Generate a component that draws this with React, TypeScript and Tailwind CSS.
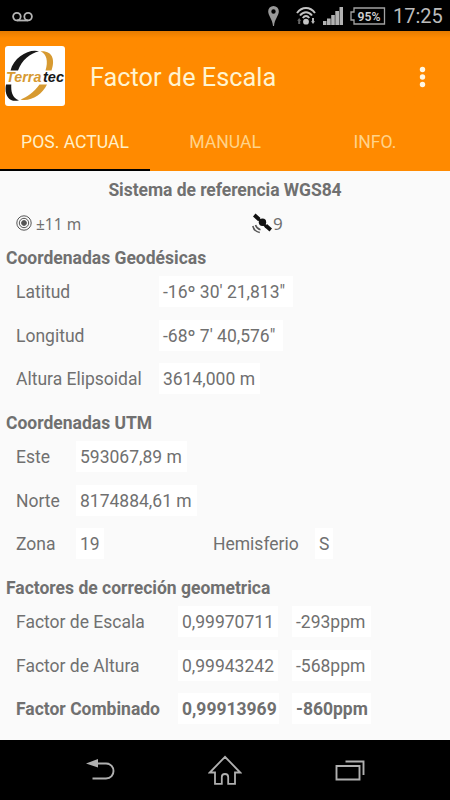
import React from "react";

function Value({ children, className = "" }: { children: React.ReactNode; className?: string }) {
  return <span className={`h-[31px] bg-white px-[4px] ${className}`}>{children}</span>;
}

function Heading({ children }: { children: React.ReactNode }) {
  return <h2 className="h-[33.6px] pt-[11.6px] pl-[6px] font-bold leading-[22px]">{children}</h2>;
}

function Row({
  label,
  labelWidth,
  children,
  bold = false,
}: {
  label: string;
  labelWidth: string;
  children: React.ReactNode;
  bold?: boolean;
}) {
  return (
    <div className={`flex h-[43.8px] items-center pl-[16px] leading-[32.6px] ${bold ? "font-bold" : ""}`}>
      <span className={`h-[31px] shrink-0 ${labelWidth}`}>{label}</span>
      {children}
    </div>
  );
}

function StatusBar() {
  return (
    <div className="flex h-[31px] shrink-0 items-center bg-black text-[#b4b4b4]">
      <svg className="mt-[2px] ml-[12px]" width="21" height="12" viewBox="0 0 21 12" fill="none" stroke="currentColor" strokeWidth="1.8">
        <circle cx="4.9" cy="5.6" r="3.8" />
        <circle cx="16.1" cy="5.6" r="3.8" />
        <path d="M4.9 9.5H16.1" />
      </svg>
      <svg className="ml-[235px]" width="11" height="20" viewBox="0 0 11 20" fill="#999">
        <path fillRule="evenodd" d="M5.5 0A5.3 5.3 0 0 0 .2 5.5C.2 9.5 4.4 13 5 20h1c.6-7 4.8-10.500 4.800-14.500A5.300 5.300 0 0 0 5.500 0Zm0 3.300a2.200 2.200 0 1 1 0 4.400 2.200 2.200 0 0 1 0-4.400Z" />
      </svg>
      <svg className="ml-[17px]" width="20" height="20" viewBox="0 0 20 20" fill="none" stroke="#c4c4c4" strokeWidth="2">
        <path d="M1 7C6 .3 14 .3 19 7" />
        <path d="M4 9.500C7.500 5 12.500 5 16 9.500" />
        <path d="M6.800 12C8.700 9.300 11.300 9.300 13.200 12" />
        <circle cx="10" cy="15.700" r="2.900" fill="#c4c4c4" stroke="none" />
        <path d="M3.200 12 5.200 14.700H4.200V18H2.200V14.700H1.200Z" fill="#666" stroke="none" />
        <path d="M16 12h2v3.300h1L17 18l-2-2.700h1Z" fill="#b4b4b4" stroke="none" />
      </svg>
      <svg className="ml-[7px]" width="21" height="18" viewBox="0 0 21 18" fill="#b2b2b2">
        <path d="M0 14h3.500v4H0ZM4 11.500h3.700V18H4ZM8.200 8h3.600v10H8.200ZM12.300 4H16v14h-3.700ZM16.500 0H20v18h-3.500Z" />
      </svg>
      <svg className="ml-[6px]" width="36" height="18" viewBox="0 0 36 18">
        <path d="M4 1H34.500V17H4V13H1V5H4Z" fill="none" stroke="#a3a3a3" strokeWidth="1.300" />
        <text x="19" y="13.700" textAnchor="middle" fontFamily="Roboto, sans-serif" fontSize="13.500" fontWeight="600" fill="#cecece" textLength="23" lengthAdjust="spacingAndGlyphs">95%</text>
      </svg>
      <span className="ml-[7px] pt-[2px] text-[20px] leading-[31px] text-[#bcbcbc]">17:25</span>
    </div>
  );
}

function Logo() {
  return (
    <svg className="-mt-[1px] ml-[5px] shrink-0" width="60" height="60" viewBox="0 0 60 60">
      <rect width="60" height="60" rx="3" fill="#fff" />
      <path d="M34 5.300C24 2.500 9 11 5.500 24.500h7.500C17 14 25 7.500 34 5.300Z" fill="#171717" />
      <path d="M35.500 5.300c6 2.500 8 10 5 19.200h6C50 15 48.500 4.500 35.500 5.300Z" fill="#d79a31" />
      <path d="M1 38.500h5.300c-.5 8 1.500 13.500 7.700 15.800C4 57-1 49 1 38.500Z" fill="#171717" />
      <path d="M42 38.500h-7.500C29 46.500 22 51 15.500 53.500 25 56 37 49 42 38.500Z" fill="#d79a31" />
      <g fontFamily="Liberation Sans, Arial, sans-serif" fontSize="14" fontStyle="italic" fontWeight="700">
        <text x="1" y="36.300" fill="#d79a31" textLength="35.500" lengthAdjust="spacingAndGlyphs">Terra</text>
        <text x="38" y="36.300" fill="#171717" textLength="21" lengthAdjust="spacingAndGlyphs">tec</text>
      </g>
    </svg>
  );
}

function NavBar() {
  return (
    <nav className="flex h-[60px] shrink-0 items-center bg-black pl-[86px]">
      <svg width="30" height="22" viewBox="0 0 30 22" fill="none" stroke="#b0b0b0" strokeWidth="1.900">
        <path d="M11 4.500H20C30 4.500 30 19.500 20 19.500H6.500" />
        <path d="M0 4.500 12 0v8.500Z" fill="#b0b0b0" stroke="none" />
      </svg>
      <svg className="ml-[92px]" width="34" height="30" viewBox="0 0 34 30" fill="none" stroke="#b0b0b0" strokeWidth="1.800">
        <path d="M17 1.800 1.800 17.500H7V28.800H13.800V22C13.800 18 20.200 18 20.200 22V28.800H27V17.500H32.200Z" />
      </svg>
      <svg className="ml-[93px]" width="30" height="21" viewBox="0 0 30 21" fill="none" stroke="#b0b0b0" strokeWidth="1.900">
        <path d="M1.500 6H24.500V19.500H1.500Z" />
        <path d="M10.500 1.500H28.500V15" />
      </svg>
    </nav>
  );
}

export default function App() {
  return (
    <div className="flex h-[800px] w-[450px] flex-col overflow-hidden bg-[#fafafa] font-['Roboto','Noto_Sans',sans-serif]">
      <StatusBar />
      <header className="h-[140px] shrink-0 bg-[#ff8a00]">
        <div className="flex h-[91px] items-center bg-linear-to-b from-[#e67c00] to-[#ff8a00] to-[7px]">
          <Logo />
          <h1 className="mt-[2px] ml-[25px] text-[25.3px] leading-[30px] text-[#fff4d0]">Factor de Escala</h1>
          <svg className="mr-[24px] ml-auto" width="7" height="22" viewBox="0 0 7 22" fill="#fff8e5">
            <circle cx="3.500" cy="3.500" r="2.700" />
            <circle cx="3.500" cy="11" r="2.700" />
            <circle cx="3.500" cy="18.500" r="2.700" />
          </svg>
        </div>
        <div className="grid h-[49px] grid-cols-3 text-center text-[17.600px] leading-[40px] text-[#ffd38a]">
          <div className="border-b-2 border-black text-[#fff0c8]">POS. ACTUAL</div>
          <div>MANUAL</div>
          <div>INFO.</div>
        </div>
      </header>
      <main className="h-[569px] shrink-0 text-[17.500px] text-[#707070]">
        <h2 className="h-[38px] text-center font-bold leading-[39px] tracking-[-0.05px]">Sistema de referencia WGS84</h2>
        <div className="flex h-[26.800px] items-center pt-[2px] pl-[16px]">
          <svg width="16" height="16" viewBox="0 0 16 16" fill="none" stroke="#555" strokeWidth="1">
            <circle cx="8" cy="8" r="7.200" />
            <circle cx="8" cy="8" r="4.700" />
            <circle cx="8" cy="8" r="2.400" fill="#555" />
          </svg>
          <span className="ml-[4px] w-[216px] pt-[2px] font-['Noto_Sans',sans-serif] text-[15.500px] leading-[26px]">±11 m</span>
          <svg width="21" height="21" viewBox="0 0 21 21" fill="#111">
            <path d="m3.500 .5 5 4.500-2.500 3-5-4.500ZM15 11l5 4.500-2.500 3-5-4.500Z" />
            <path d="m5 4.500 10 10" stroke="#111" strokeWidth="2.500" />
            <circle cx="10.500" cy="9.300" r="3.700" />
            <path d="M.8 13c.8 3.800 3.200 5.800 7 6.500M3.500 12c.8 2.700 2.300 4 5 4.700" fill="none" stroke="#555" strokeWidth="1.600" />
          </svg>
          <span className="pt-[2px] font-['Noto_Sans',sans-serif] text-[17px] leading-[26px]">9</span>
        </div>

        <Heading>Coordenadas Geodésicas</Heading>
        <Row label="Latitud" labelWidth="w-[143px]"><Value className="w-[134px]">-16º 30' 21,813"</Value></Row>
        <Row label="Longitud" labelWidth="w-[143px]"><Value className="w-[124px]">-68º 7' 40,576"</Value></Row>
        <Row label="Altura Elipsoidal" labelWidth="w-[143px]"><Value className="w-[101px]">3614,000 m</Value></Row>

        <Heading>Coordenadas UTM</Heading>
        <Row label="Este" labelWidth="w-[60px]"><Value className="w-[111px]">593067,89 m</Value></Row>
        <Row label="Norte" labelWidth="w-[60px]"><Value className="w-[121px]">8174884,61 m</Value></Row>
        <Row label="Zona" labelWidth="w-[60px]">
          <Value className="w-[28px]">19</Value>
          <span className="ml-[109px] h-[31px] w-[102px]">Hemisferio</span>
          <Value className="w-[18px]">S</Value>
        </Row>

        <Heading>Factores de correción geometrica</Heading>
        <Row label="Factor de Escala" labelWidth="w-[162px]">
          <Value className="w-[100px]">0,99970711</Value>
          <Value className="ml-[14px] w-[79px]">-293ppm</Value>
        </Row>
        <Row label="Factor de Altura" labelWidth="w-[162px]">
          <Value className="w-[100px]">0,99943242</Value>
          <Value className="ml-[14px] w-[79px]">-568ppm</Value>
        </Row>
        <Row label="Factor Combinado" labelWidth="w-[162px]" bold>
          <Value className="w-[101px]">0,99913969</Value>
          <Value className="ml-[13px] w-[79px]">-860ppm</Value>
        </Row>
      </main>
      <NavBar />
    </div>
  );
}
